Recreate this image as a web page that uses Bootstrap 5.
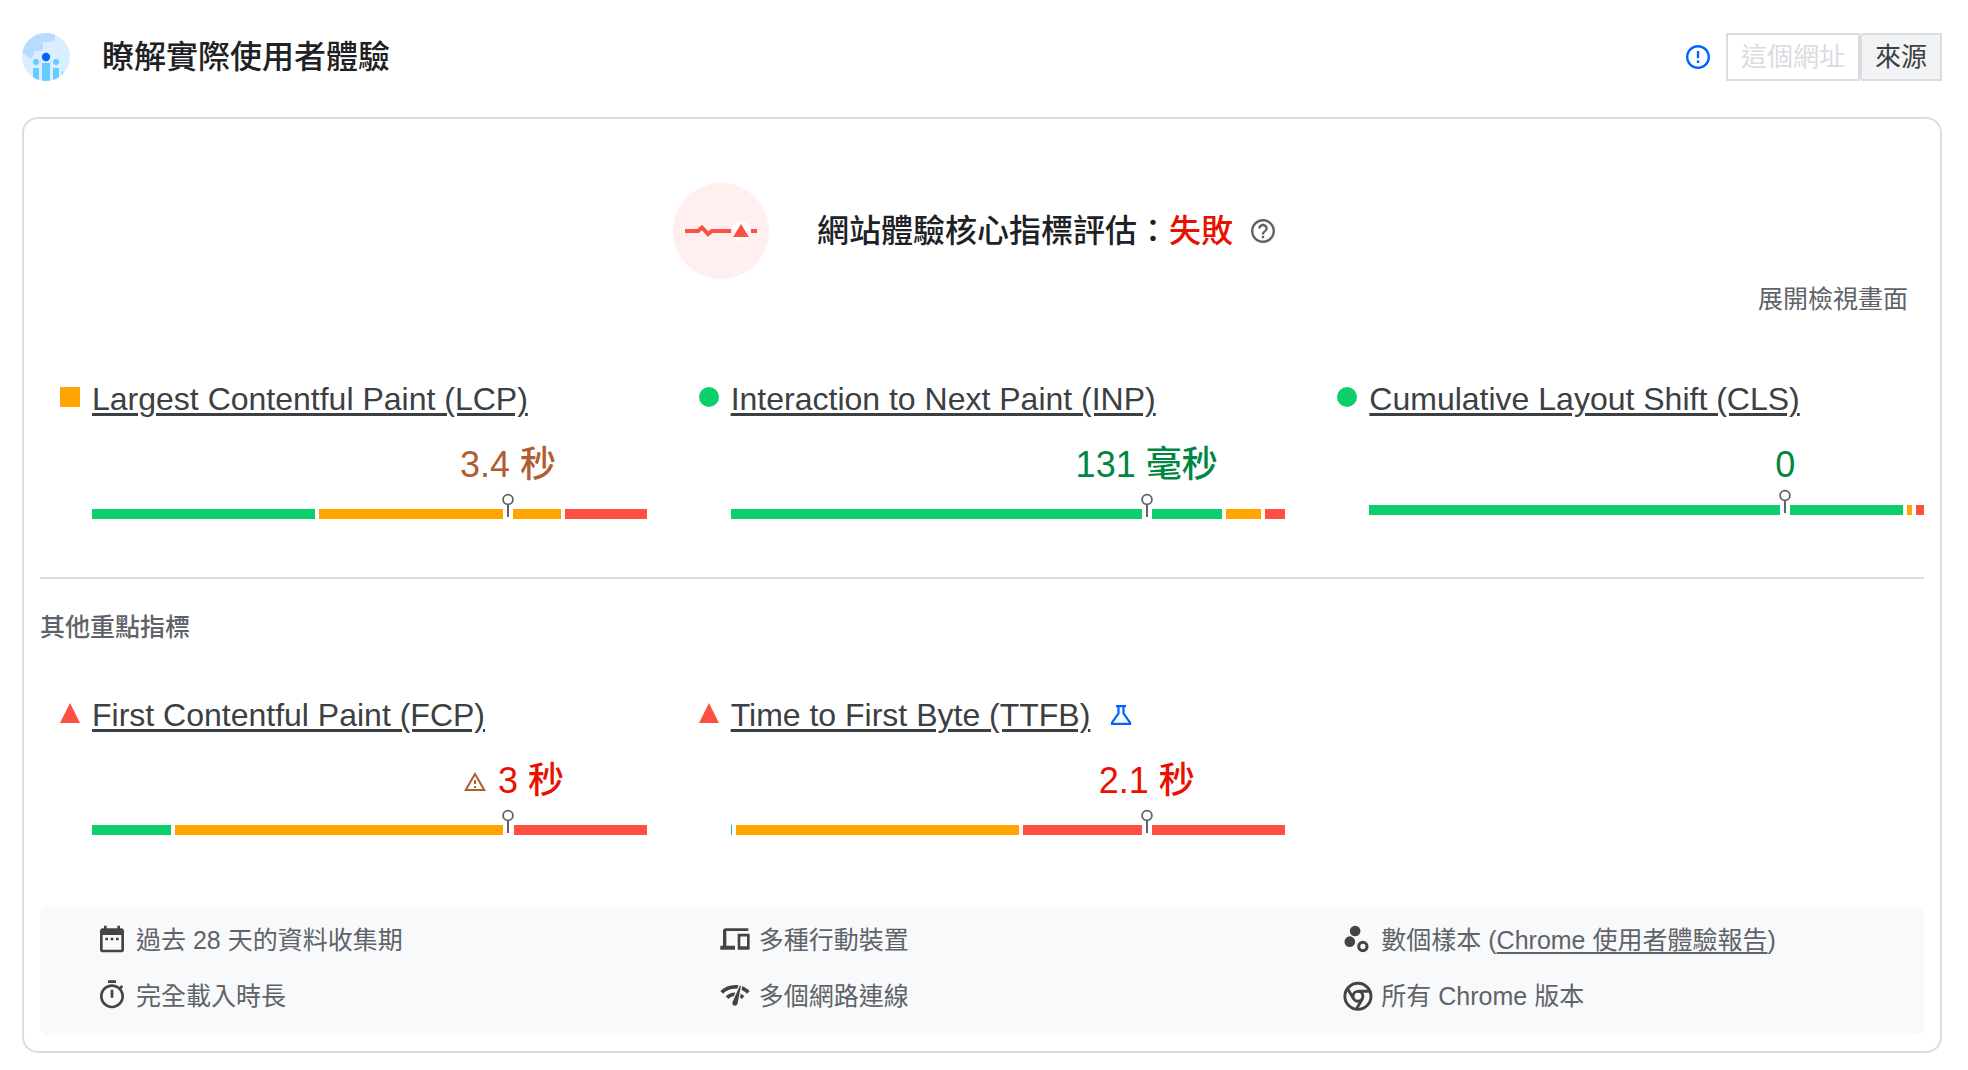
<!DOCTYPE html>
<html lang="zh-Hant">
<head>
<meta charset="utf-8">
<meta name="viewport" content="width=device-width, initial-scale=1">
<title>瞭解實際使用者體驗</title>
<link href="https://cdn.jsdelivr.net/npm/bootstrap@5.3.0/dist/css/bootstrap.min.css" rel="stylesheet">
<style>
  :root {
    --good: #0cce6b; --mid: #ffa400; --poor: #ff4e42;
    --line: #dadce0; --ink: #202124; --ink-2: #3c4043; --ink-3: #5f6368; --accent: #0062ff;
  }
  body { font-family: "Liberation Sans", "Noto Sans CJK TC", sans-serif; color: var(--ink); background: #fff; }
  svg { display: block; flex: none; }
  .page { padding: 33px 26px 16px 22px; }
  .page-head { gap: 32px; margin-bottom: 36px; }
  .title-lg { font-size: 32px; line-height: 48px; font-weight: 500; }
  .scope .btn { font-size: 26px; line-height: 44px; padding: 0 13px; border: 2px solid var(--line); color: var(--ink-2); background: #f1f3f4; border-radius: 4px; }
  .scope .btn:first-child { border-radius: 0 4px 4px 0; }
  .scope .btn:last-child { border-radius: 4px 0 0 4px; }
  .scope .btn:disabled { color: var(--line); background: #fff; opacity: 1; }
  .panel { border: 2px solid var(--line); border-radius: 16px; padding: 64px 16px 16px; }
  .assess { gap: 48px; padding-right: 16px; }
  .assess-text { gap: 18px; }
  .failed { color: #eb0f00; }
  .expand { font-size: 25px; line-height: 40px; color: var(--ink-3); padding: 0; margin: 0 16px; border: 0; background: none; }
  .metric-grid { display: grid; grid-template-columns: repeat(3, 1fr); column-gap: 32px; }
  .metric-grid.core { padding-top: 60px; }
  .metric-grid.extra { padding-top: 50px; }
  .metric { display: grid; grid-template-columns: 52px 1fr; }
  .metric-body { min-width: 0; }
  .marker { margin: 8px 0 0 20px; }
  .metric-link { font-size: 32px; line-height: 40px; color: var(--ink-2); text-decoration: underline; text-decoration-thickness: 3px; text-underline-offset: 3px; }
  .metric-name { gap: 20px; margin-bottom: 22px; }
  .reading-row { padding-left: 50%; }
  .reading { font-size: 36px; line-height: 48px; font-weight: 500; white-space: nowrap; }
  .reading-mid { color: #b05d31; } .reading-good { color: #018642; } .reading-poor { color: #eb0f00; }
  .warn { margin: 0 12px; }
  .dist { gap: 4px; height: 10px; margin-top: 20px; }
  .dist.tight { margin-top: 16px; }
  .dist > span { flex-basis: 0; }
  .seg-good { background: var(--good); } .seg-mid { background: var(--mid); } .seg-poor { background: var(--poor); }
  .pin { position: absolute; left: 75%; top: -16px; margin-left: -6px; }
  .rule { height: 2px; background: var(--line); margin: 58px 0 30px; }
  .subhead { font-size: 25px; line-height: 36px; font-weight: 500; color: var(--ink-3); margin: 0; }
  .facts { display: grid; grid-template-columns: repeat(3, 1fr); row-gap: 22px; background: #f8f9fb; border-radius: 8px; padding: 16px 8px 22px; margin-top: 72px; color: var(--ink-3); font-size: 25px; line-height: 34px; }
  .fact { gap: 8px; padding-left: 48px; }
  .fact a { color: inherit; text-underline-offset: 3px; text-decoration-thickness: 2px; }
  .fact svg { fill: #444; }
</style>
<script src="https://cdn.jsdelivr.net/npm/bootstrap@5.3.0/dist/js/bootstrap.bundle.min.js"></script>
</head>
<body>
<svg class="d-none" aria-hidden="true">
  <symbol id="pin" viewBox="0 0 12 26"><path d="M1 16h10v10H1z" fill="#fff"/><path d="M6 11v13" stroke="#5f6368" stroke-width="2"/><circle cx="6" cy="6.500" r="4.900" fill="#fff" stroke="#5f6368" stroke-width="1.800"/></symbol>
  <symbol id="tri" viewBox="0 0 20 20"><path d="M10 0l10 20H0z" fill="#ff4e42"/></symbol>
  <symbol id="dot" viewBox="0 0 20 20"><circle cx="10" cy="10" r="10" fill="#0cce6b"/></symbol>
</svg>

<div class="page container-fluid">
  <header class="page-head d-flex align-items-center">
    <svg width="48" height="48" viewBox="0 0 48 48" aria-hidden="true">
      <defs><clipPath id="disc"><circle cx="24" cy="24" r="24"/></clipPath></defs>
      <g clip-path="url(#disc)">
        <path d="M0 0h48v48H0z" fill="#dbeeff"/>
        <path d="M0 19L8 26L12 22V20Q12 18 14 18H18Q21 18 21 15V9H28Q32 9 33 5V0H0z" fill="#b8dcff"/>
        <path d="M11 35h6v13h-6zM31 35h6v13h-6zM20 30h8v18h-8zM40 38h1v3h-1z" fill="#66ccff"/>
        <circle cx="14" cy="29" r="3" fill="#66ccff"/><circle cx="34" cy="29" r="3" fill="#66ccff"/>
        <circle cx="24" cy="24" r="4.200" fill="#0062ff"/>
      </g>
    </svg>
    <h1 class="title-lg m-0 me-auto">瞭解實際使用者體驗</h1>
    <div class="d-flex align-items-center gap-3">
      <svg width="24" height="24" viewBox="2 2 20 20" fill="#0062ff" aria-hidden="true"><path d="M11 15h2v2h-2zm0-8h2v6h-2zm.99-5C6.47 2 2 6.48 2 12s4.47 10 9.99 10C17.52 22 22 17.52 22 12S17.52 2 11.99 2zM12 20c-4.42 0-8-3.58-8-8s3.58-8 8-8 8 3.58 8 8-3.58 8-8 8z"/></svg>
      <div class="scope btn-group" role="group">
        <button type="button" class="btn" disabled>這個網址</button>
        <button type="button" class="btn ms-0">來源</button>
      </div>
    </div>
  </header>

  <main class="panel">
    <div class="assess d-flex justify-content-center align-items-center">
      <svg width="96" height="96" viewBox="0 0 96 96" aria-hidden="true">
        <circle cx="48" cy="48" r="48" fill="#ffefef"/>
        <path d="M12 48h13l4-3.5 6 6.500 4-3h20" fill="none" stroke="#ff4e42" stroke-width="4"/>
        <circle cx="68" cy="48" r="10" fill="#fff"/><path d="M68 41l8 13H60z" fill="#ff4e42"/>
        <path d="M78 48h6" stroke="#ff4e42" stroke-width="4"/>
      </svg>
      <div class="assess-text d-flex align-items-center">
        <h2 class="title-lg m-0">網站體驗核心指標評估：<span class="failed">失敗</span></h2>
        <svg width="24" height="24" viewBox="2 2 20 20" fill="#5f6368" aria-hidden="true"><path d="M11 18h2v-2h-2v2zm1-16C6.480 2 2 6.480 2 12s4.480 10 10 10 10-4.480 10-10S17.520 2 12 2zm0 18c-4.410 0-8-3.590-8-8s3.590-8 8-8 8 3.590 8 8-3.590 8-8 8zm0-14c-2.210 0-4 1.790-4 4h2c0-1.100.9-2 2-2s2 .9 2 2c0 2-3 1.750-3 5h2c0-2.250 3-2.500 3-5 0-2.210-1.790-4-4-4z"/></svg>
      </div>
    </div>
    <div class="d-flex justify-content-end"><button type="button" class="expand">展開檢視畫面</button></div>

    <section class="metric-grid core">
      <article class="metric">
        <svg class="marker" width="20" height="20" viewBox="0 0 20 20"><path d="M0 0h20v20H0z" fill="#ffa400"/></svg>
        <div class="metric-body">
          <div class="metric-name d-flex align-items-center"><a class="metric-link" href="#lcp">Largest Contentful Paint (LCP)</a></div>
          <div class="reading-row d-flex justify-content-center"><span class="reading reading-mid">3.4 秒</span></div>
          <div class="dist d-flex position-relative"><span class="seg-good" style="flex-grow:223"></span><span class="seg-mid" style="flex-grow:242"></span><span class="seg-poor" style="flex-grow:82"></span><svg class="pin" width="12" height="26"><use href="#pin"/></svg></div>
        </div>
      </article>
      <article class="metric">
        <svg class="marker" width="20" height="20"><use href="#dot"/></svg>
        <div class="metric-body">
          <div class="metric-name d-flex align-items-center"><a class="metric-link" href="#inp">Interaction to Next Paint (INP)</a></div>
          <div class="reading-row d-flex justify-content-center"><span class="reading reading-good">131 毫秒</span></div>
          <div class="dist d-flex position-relative"><span class="seg-good" style="flex-grow:491"></span><span class="seg-mid" style="flex-grow:35"></span><span class="seg-poor" style="flex-grow:20"></span><svg class="pin" width="12" height="26"><use href="#pin"/></svg></div>
        </div>
      </article>
      <article class="metric">
        <svg class="marker" width="20" height="20"><use href="#dot"/></svg>
        <div class="metric-body">
          <div class="metric-name d-flex align-items-center"><a class="metric-link" href="#cls">Cumulative Layout Shift (CLS)</a></div>
          <div class="reading-row d-flex justify-content-center"><span class="reading reading-good">0</span></div>
          <div class="dist tight d-flex position-relative"><span class="seg-good" style="flex-grow:534"></span><span class="seg-mid" style="flex-grow:5"></span><span class="seg-poor" style="flex-grow:8"></span><svg class="pin" width="12" height="26"><use href="#pin"/></svg></div>
        </div>
      </article>
    </section>

    <div class="rule"></div>
    <h3 class="subhead">其他重點指標</h3>

    <section class="metric-grid extra">
      <article class="metric">
        <svg class="marker" width="20" height="20"><use href="#tri"/></svg>
        <div class="metric-body">
          <div class="metric-name d-flex align-items-center"><a class="metric-link" href="#fcp">First Contentful Paint (FCP)</a></div>
          <div class="reading-row d-flex justify-content-center align-items-center"><svg class="warn" width="22" height="19" viewBox="1 2 22 19" fill="#b05d31"><path d="M12 5.990L19.530 19H4.470L12 5.990M12 2L1 21h22L12 2zm1 14h-2v2h2v-2zm0-6h-2v4h2v-4z"/></svg><span class="reading reading-poor">3 秒</span></div>
          <div class="dist d-flex position-relative"><span class="seg-good" style="flex-grow:79"></span><span class="seg-mid" style="flex-grow:335"></span><span class="seg-poor" style="flex-grow:133"></span><svg class="pin" width="12" height="26"><use href="#pin"/></svg></div>
        </div>
      </article>
      <article class="metric">
        <svg class="marker" width="20" height="20"><use href="#tri"/></svg>
        <div class="metric-body">
          <div class="metric-name d-flex align-items-center"><a class="metric-link" href="#ttfb">Time to First Byte (TTFB)</a>
            <svg width="22" height="20" viewBox="0 0 22 20" fill="none" stroke="#0062ff" stroke-width="2.200"><path d="M6 1.100h10M8.500 1v7.500L2 17.500v1.400h18v-1.400L13.500 8.500V1"/></svg></div>
          <div class="reading-row d-flex justify-content-center"><span class="reading reading-poor">2.1 秒</span></div>
          <div class="dist d-flex position-relative"><span class="seg-good" style="flex-grow:1"></span><span class="seg-mid" style="flex-grow:283"></span><span class="seg-poor" style="flex-grow:262"></span><svg class="pin" width="12" height="26"><use href="#pin"/></svg></div>
        </div>
      </article>
    </section>

    <section class="facts">
      <div class="fact d-flex"><svg width="32" height="32" viewBox="0 0 24 24"><path d="M9 11H7v2h2v-2zm4 0h-2v2h2v-2zm4 0h-2v2h2v-2zm2-7h-1V2h-2v2H8V2H6v2H5c-1.110 0-1.990.9-1.990 2L3 20c0 1.100.89 2 2 2h14c1.100 0 2-.9 2-2V6c0-1.100-.9-2-2-2zm0 16H5V9h14v11z"/></svg><span>過去 28 天的資料收集期</span></div>
      <div class="fact d-flex"><svg width="32" height="32" viewBox="0 0 24 24"><path d="M1 20v-3h2V6c0-1.100.9-2 2-2h17v2H5.500v11H12v3zM14.500 8h8q.5 0 .5.500v11q0 .5-.5.500h-8q-.5 0-.5-.5v-11q0-.5.500-.5zm1.500 2.200V17.500h5v-7.300z" fill-rule="evenodd"/></svg><span>多種行動裝置</span></div>
      <div class="fact d-flex"><svg width="32" height="32" viewBox="0 0 24 24"><circle cx="10.600" cy="6" r="4"/><circle cx="6.600" cy="14" r="4"/><circle cx="16.400" cy="17.600" r="3.100" fill="none" stroke="#444" stroke-width="2.300"/></svg><span>數個樣本 (<a href="#crux">Chrome 使用者體驗報告</a>)</span></div>
      <div class="fact d-flex"><svg width="32" height="32" viewBox="0 0 24 24"><path d="M15 1H9v2h6V1zm-4 13h2V8h-2v6zm8.030-6.610l1.420-1.420c-.43-.51-.9-.99-1.410-1.410l-1.420 1.420C16.070 4.740 14.120 4 12 4c-4.970 0-9 4.030-9 9s4.020 9 9 9 9-4.030 9-9c0-2.120-.74-4.070-1.970-5.610zM12 20c-3.870 0-7-3.130-7-7s3.130-7 7-7 7 3.130 7 7-3.130 7-7 7z"/></svg><span>完全載入時長</span></div>
      <div class="fact d-flex"><svg width="32" height="32" viewBox="0 0 24 24"><path d="M15.900 5c-.17 0-.32.09-.41.23l-.07.15-5.180 11.650c-.16.29-.26.61-.26.96 0 1.110.9 2.010 2.010 2.010.96 0 1.770-.68 1.960-1.590l.01-.03L16.400 5.500c0-.28-.22-.5-.5-.5zM1 9l2 2c2.880-2.880 6.790-4.080 10.530-3.620l1.190-2.680C9.890 3.840 4.740 5.270 1 9zm20 2l2-2c-1.640-1.640-3.550-2.820-5.590-3.570l-.53 2.820c1.500.62 2.900 1.530 4.120 2.750zm-4 4l2-2c-.8-.8-1.700-1.420-2.660-1.890l-.55 2.920c.42.27.83.59 1.210.97zM5 13l2 2c1.130-1.130 2.560-1.790 4.030-2l1.280-2.880c-2.630-.08-5.300.87-7.310 2.880z"/></svg><span>多個網路連線</span></div>
      <div class="fact d-flex"><svg width="32" height="32" viewBox="0 0 24 24"><g fill="none" stroke="#444" stroke-width="2.200"><circle cx="12.700" cy="13" r="9.800"/><circle cx="12.700" cy="13" r="3.700"/><path d="M12.700 9.200H21.500M9.400 14.900L5 7.300M16 14.900L11.600 22.500"/></g></svg><span>所有 Chrome 版本</span></div>
    </section>
  </main>
</div>
</body>
</html>
